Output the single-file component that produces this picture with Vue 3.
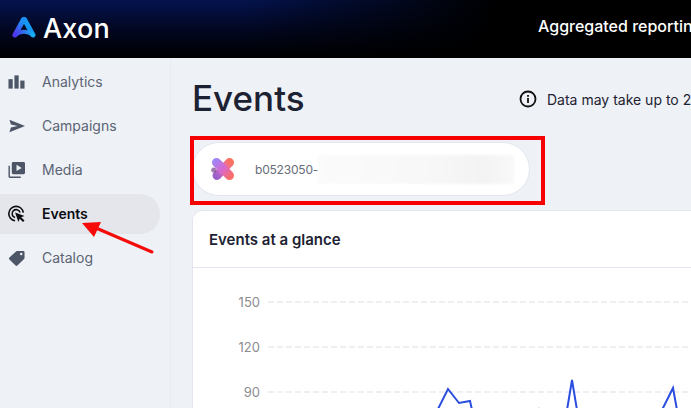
<script setup>
const navItems = [
  { label: 'Analytics', icon: 'bars' },
  { label: 'Campaigns', icon: 'send' },
  { label: 'Media', icon: 'media' },
  { label: 'Events', icon: 'events', active: true },
  { label: 'Catalog', icon: 'tag' },
]
const gridRows = [
  { label: '150' },
  { label: '120' },
  { label: '90' },
]
</script>

<template>
  <div class="page">
    <header class="topbar">
      <div class="brand">
        <svg class="logo" width="24" height="22" viewBox="0 0 24 22" fill="none">
          <defs>
            <linearGradient id="lg1" x1="0" y1="1" x2="0.6" y2="0">
              <stop offset="0" stop-color="#5a35ee" />
              <stop offset="1" stop-color="#1c8ff5" />
            </linearGradient>
            <linearGradient id="lg2" x1="0" y1="0" x2="1" y2="0">
              <stop offset="0" stop-color="#4a36ee" />
              <stop offset="1" stop-color="#18aef0" />
            </linearGradient>
          </defs>
          <path d="M21 19 12.500 3.500" stroke="#1499f3" stroke-width="5" stroke-linecap="round" />
          <path d="M3 19 11.500 3.500" stroke="url(#lg1)" stroke-width="5" stroke-linecap="round" />
          <path d="M3 19C8 14.500 16 14.500 21 19" stroke="url(#lg2)" stroke-width="4" stroke-linecap="round" />
        </svg>
        <span class="brand-name">Axon</span>
      </div>
      <div class="topbar-title">Aggregated reporting</div>
    </header>

    <div class="body">
      <aside class="sidebar">
        <nav class="nav">
          <a v-for="item in navItems" :key="item.label" class="nav-item" :class="{ active: item.active }">
            <svg class="nav-icon" width="17" height="18" viewBox="0 0 18 18">
              <g v-if="item.icon === 'bars'" fill="currentColor">
                <rect x="0.500" y="6" width="4.500" height="10" />
                <rect x="6.800" y="2" width="4.500" height="14" />
                <rect x="13" y="7.500" width="4.500" height="8.500" />
              </g>
              <path v-else-if="item.icon === 'send'" fill="currentColor" d="M1.500 2.500 18 9 1.500 15.500l1.600-5 7-1.500-7-1.500z" />
              <g v-else-if="item.icon === 'media'" fill="currentColor">
                <path fill-rule="evenodd" d="M5.500 .5h11A1.500 1.500 0 0 1 18 2v10a1.500 1.500 0 0 1-1.500 1.500h-11A1.500 1.500 0 0 1 4 12V2A1.500 1.500 0 0 1 5.500 .5zm3.500 3v6.500l5.500-3.250z" />
                <path d="M.5 4.500H2v11.500h11.500v1.500H2A1.500 1.500 0 0 1 .5 16z" />
              </g>
              <g v-else-if="item.icon === 'events'" fill="none" stroke="currentColor" stroke-width="1.700">
                <path d="M7.500 16.200A7.700 7.700 0 1 1 16.200 7.500" />
                <path d="M7.500 12.800A4.300 4.300 0 1 1 12.800 7.500" />
                <path fill="currentColor" stroke="none" d="M7.500 7.500 17.500 11l-3.600 1.400 3.600 3.600-1.600 1.600-3.500-3.600L11 17.500z" />
              </g>
              <path v-else fill="currentColor" d="M9.500 1.500H16a1.500 1.500 0 0 1 1.500 1.500v6a1.500 1.500 0 0 1-.5 1L10 17a1.500 1.500 0 0 1-2 0L1.500 10.500a1.500 1.500 0 0 1 0-2L8.500 2a1.500 1.500 0 0 1 1-.5zM14 3.500a1.300 1.300 0 1 0 0 2.600A1.300 1.300 0 0 0 14 3.500z" />
            </svg>
            <span class="nav-label">{{ item.label }}</span>
          </a>
        </nav>
      </aside>

      <main class="main">
        <div class="title-row">
          <h1 class="title">Events</h1>
          <div class="notice">
            <svg width="18" height="18" viewBox="0 0 18 18" fill="none">
              <circle cx="9" cy="9" r="7.500" stroke="#111" stroke-width="1.800" />
              <rect x="8.100" y="8" width="1.800" height="5" fill="#111" />
              <rect x="8.100" y="5" width="1.800" height="1.800" fill="#111" />
            </svg>
            <span>Data may take up to 2 hours to update</span>
          </div>
        </div>

        <div class="pill">
          <svg class="pill-logo" width="26" height="26" viewBox="0 0 26 26">
            <defs>
              <linearGradient id="pa" x1="5" y1="5" x2="21" y2="21" gradientUnits="userSpaceOnUse">
                <stop offset="0" stop-color="#a184f5" />
                <stop offset="0.500" stop-color="#d868d0" />
                <stop offset="1" stop-color="#fb6d66" />
              </linearGradient>
              <linearGradient id="pb" x1="20" y1="6" x2="6" y2="20" gradientUnits="userSpaceOnUse">
                <stop offset="0" stop-color="#fb7360" />
                <stop offset="0.500" stop-color="#e56cc4" />
                <stop offset="1" stop-color="#9a62c8" />
              </linearGradient>
            </defs>
            <g fill="none" stroke-linecap="round" stroke-width="9">
              <path d="M19.500 6.500 7 19.500" stroke="url(#pb)" />
              <path d="M6.500 6.500 19.500 19.500" stroke="url(#pa)" />
            </g>
            <circle cx="3.800" cy="14" r="2.600" fill="#7f4f90" opacity="0.750" />
          </svg>
          <span class="pill-id">b0523050-</span>
          <span class="pill-blur"></span>
        </div>

        <section class="card">
          <div class="card-head">Events at a glance</div>
          <div class="chart">
            <div v-for="row in gridRows" :key="row.label" class="grid-row">
              <span class="grid-label">{{ row.label }}</span>
              <span class="grid-line"></span>
            </div>
            <svg class="plot" width="499" height="198" viewBox="192 210 499 198" fill="none">
              <polyline points="438,408 448,388 459,402 470,400 472,409" />
              <polyline points="567,409 572,379 577,409" />
              <polyline points="662,409 673,387 677,409" />
              <path class="plot-alt" d="M537 408 540 407" />
            </svg>
          </div>
        </section>
      </main>
    </div>

    <div class="annot-box"></div>
    <svg class="annot-arrow" width="80" height="40" viewBox="0 0 80 40">
      <path d="M16 9 72 33" stroke="#f60b0b" stroke-width="3" stroke-linecap="round" />
      <path d="M2 4 21 3 14 18z" fill="#f60b0b" />
    </svg>
  </div>
</template>

<style>
html, body { margin: 0; background: #eef1f6; }
</style>

<style scoped>
.page {
  position: relative;
  width: 691px;
  height: 408px;
  overflow: hidden;
  background: #eef1f6;
  font-family: Inter, "Liberation Sans", sans-serif;
}
.topbar {
  height: 58px;
  display: flex;
  align-items: center;
  background:
    linear-gradient(180deg, rgba(4, 20, 82, 0.95) 0%, rgba(2, 8, 40, 0.75) 55%, rgba(0, 0, 0, 0) 100%) left / 520px 100% no-repeat,
    #000;
  position: relative;
}
.topbar::before {
  content: "";
  position: absolute;
  inset: 0;
  background: linear-gradient(90deg, rgba(0, 0, 0, 0) 35%, #000 72%);
}
.brand {
  position: relative;
  width: 538px;
  display: flex;
  align-items: center;
  gap: 7px;
  padding-left: 12px;
  box-sizing: border-box;
  flex: none;
}
.logo { flex: none; margin-top: -4px; }
.brand-name {
  color: #fff;
  font-size: 27px;
  font-weight: 500;
  letter-spacing: 0.2px;
  margin-top: -2px;
}
.topbar-title {
  position: relative;
  color: #fff;
  font-size: 16px;
  font-weight: 500;
  white-space: nowrap;
  margin-top: -6px;
}
.body {
  display: flex;
  height: 350px;
}
.sidebar {
  width: 170px;
  flex: none;
  border-right: 1px solid #e8ebf1;
}
.nav {
  display: flex;
  flex-direction: column;
  padding-top: 4px;
  width: 160px;
}
.nav-item {
  display: flex;
  align-items: center;
  height: 40px;
  margin-bottom: 4px;
  padding-left: 8px;
  gap: 17px;
  font-size: 14px;
  color: #5b6474;
  border-radius: 0 20px 20px 0;
}
.nav-label { margin-bottom: 2px; }
.nav-item.active {
  background: #e5e6eb;
  color: #0b0b12;
  font-weight: 600;
}
.nav-icon { flex: none; color: #4d5667; }
.nav-item.active .nav-icon { color: #0b0b12; }
.main {
  flex: 1;
  min-width: 0;
  padding-left: 21px;
}
.title-row {
  display: flex;
  align-items: center;
  height: 82px;
  white-space: nowrap;
}
.title {
  margin: 0 0 2px;
  font-family: Inter, sans-serif;
  font-size: 35px;
  font-weight: 500;
  color: #1d2233;
  width: 327px;
  flex: none;
}
.notice {
  display: flex;
  align-items: center;
  gap: 10px;
  font-size: 14px;
  color: #1d2233;
}
.pill {
  width: 338px;
  height: 54px;
  margin-top: 2px;
  box-sizing: border-box;
  background: #fff;
  border: 1px solid #e3e6ee;
  border-radius: 27px;
  display: flex;
  align-items: center;
  padding-left: 17px;
}
.pill-logo { flex: none; filter: blur(0.6px); }
.pill-id {
  font-size: 12px;
  letter-spacing: -0.2px;
  color: #666d7b;
  margin-left: 19px;
}
.pill-blur {
  width: 196px;
  height: 29px;
  background: linear-gradient(90deg, #fbfbfb, #f8f8f8 55%, #f3f3f3 85%, #f9f9f9);
  filter: blur(1px);
}
.card {
  margin-top: 14px;
  background: #fff;
  border: 1px solid #e3e6ee;
  border-radius: 10px 0 0 0;
  border-right: none;
  height: 220px;
}
.card-head {
  height: 56px;
  line-height: 58px;
  padding-left: 16px;
  font-size: 15px;
  font-weight: 600;
  color: #1d2233;
  border-bottom: 1px solid #e3e6ee;
}
.chart {
  position: relative;
  padding-top: 23px;
  display: flex;
  flex-direction: column;
  gap: 24px;
}
.grid-row {
  display: flex;
  align-items: center;
  height: 21px;
}
.grid-label {
  width: 67px;
  text-align: right;
  font-size: 13px;
  color: #8c8c92;
  flex: none;
}
.grid-line {
  flex: 1;
  margin-left: 8px;
  height: 2px;
  background: repeating-linear-gradient(90deg, #eeeef3 0 6px, transparent 6px 9px);
}
.plot {
  position: absolute;
  left: -1px;
  top: -57px;
}
.plot polyline {
  stroke: #2b4de0;
  stroke-width: 2;
}
.plot-alt { stroke: #c9c3ee; stroke-width: 1.500; }
.annot-box {
  position: absolute;
  left: 190px;
  top: 136px;
  width: 347px;
  height: 61px;
  border: 4px solid #f60000;
}
.annot-arrow {
  position: absolute;
  left: 80px;
  top: 219px;
}
</style>
